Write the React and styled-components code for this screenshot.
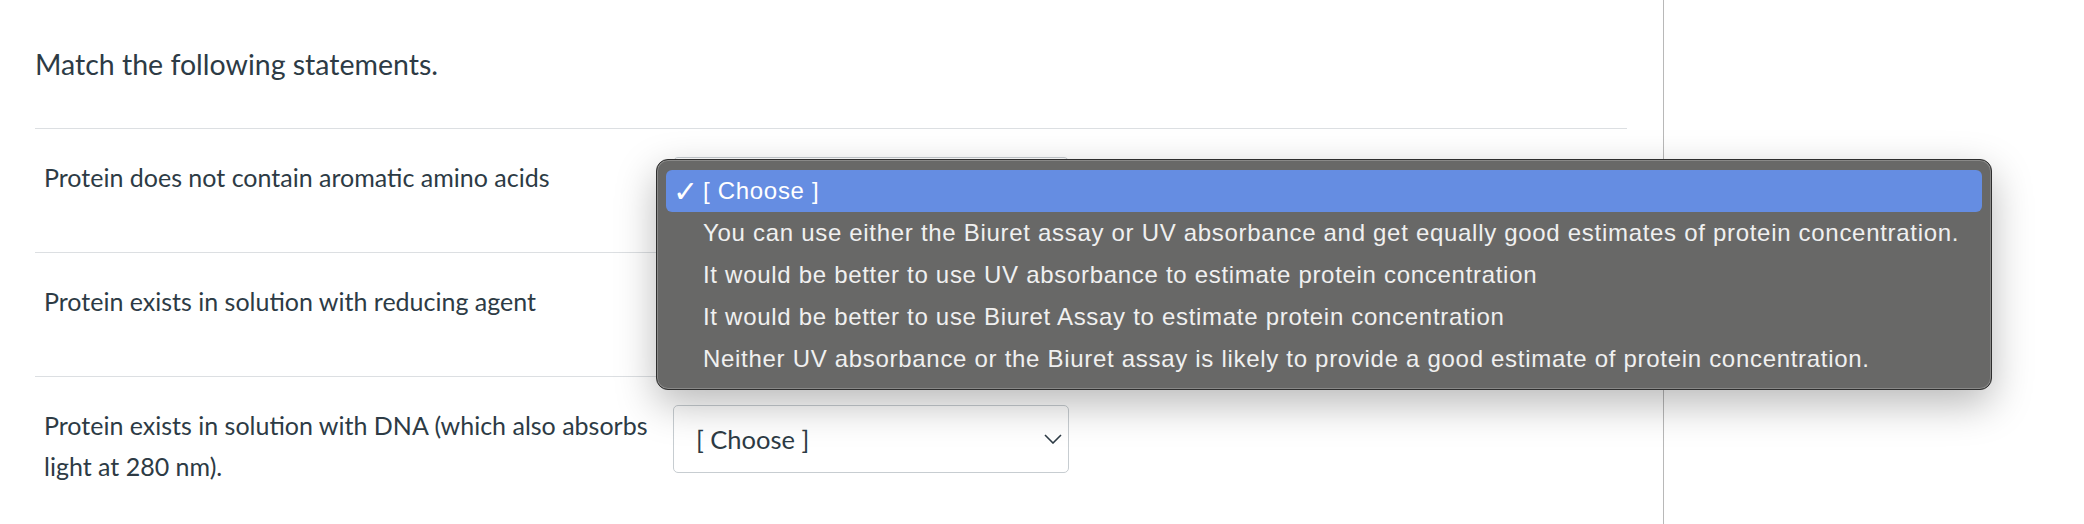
import React from "react";
import styled, { createGlobalStyle } from "styled-components";

const GlobalStyle = createGlobalStyle`
  html, body {
    margin: 0;
    padding: 0;
    background: #ffffff;
  }
  body {
    font-family: Lato, "Noto Sans", sans-serif;
    color: #2d3b45;
  }
`;

const statements = [
  "Protein does not contain aromatic amino acids",
  "Protein exists in solution with reducing agent",
  "Protein exists in solution with DNA (which also absorbs light at 280 nm).",
];

const options = [
  "You can use either the Biuret assay or UV absorbance and get equally good estimates of protein concentration.",
  "It would be better to use UV absorbance to estimate protein concentration",
  "It would be better to use Biuret Assay to estimate protein concentration",
  "Neither UV absorbance or the Biuret assay is likely to provide a good estimate of protein concentration.",
];

function App() {
  return (
    <>
      <GlobalStyle />
      <Page>
        <Main>
          <Title>Match the following statements.</Title>
          {statements.map((text, index) => (
            <MatchRow key={index}>
              <Statement>{text}</Statement>
              <SelectWrap>
                <SelectBox>
                  <span>[ Choose ]</span>
                  <Chevron viewBox="0 0 18 10">
                    <path d="M1 1 L9 9 L17 1" />
                  </Chevron>
                </SelectBox>
                {index === 0 && (
                  <PopupMenu>
                    <MenuItem $selected>
                      <Check>✓</Check>
                      [ Choose ]
                    </MenuItem>
                    {options.map((opt, i) => (
                      <MenuItem key={i}>
                        <Check />
                        {opt}
                      </MenuItem>
                    ))}
                  </PopupMenu>
                )}
              </SelectWrap>
            </MatchRow>
          ))}
        </Main>
        <Sidebar />
      </Page>
    </>
  );
}

const Page = styled.div`
  display: flex;
  min-height: 524px;
`;

const Main = styled.div`
  width: 1592px;
  padding: 0 36px 0 35px;
  border-right: 1px solid #b8b8b8;
`;

const Sidebar = styled.div`
  flex: 1;
`;

const Title = styled.div`
  font-size: 28.5px;
  line-height: 40px;
  padding: 44px 0 44px;
  border-bottom: 1px solid #dcdfe2;
`;

const MatchRow = styled.div`
  display: flex;
  align-items: flex-start;
  padding: 28px 0 27px 9px;
  border-bottom: 1px solid #dcdfe2;
  &:last-child {
    border-bottom: none;
  }
`;

const Statement = styled.div`
  width: 615px;
  margin-right: 14px;
  font-size: 25px;
  line-height: 41px;
`;

const SelectWrap = styled.div`
  position: relative;
`;

const SelectBox = styled.div`
  box-sizing: border-box;
  width: 396px;
  height: 68px;
  display: flex;
  align-items: center;
  justify-content: space-between;
  padding: 0 6px 0 22px;
  border: 1px solid #c7cdd1;
  border-radius: 5px;
  background: #ffffff;
  font-size: 25.5px;
  color: #2d3b45;
`;

const Chevron = styled.svg`
  width: 18px;
  height: 10px;
  fill: none;
  stroke: #2d3b45;
  stroke-width: 1.6;
`;

const PopupMenu = styled.div`
  position: absolute;
  left: -17px;
  top: 2px;
  z-index: 10;
  box-sizing: border-box;
  width: 1336px;
  height: 231px;
  padding: 10px 9px;
  background: #686867;
  border: 1px solid #2e2e2e;
  border-radius: 12px;
  box-shadow: inset 0 0 0 1px rgba(255, 255, 255, 0.22),
    0 14px 40px rgba(0, 0, 0, 0.28);
  font-family: "Liberation Sans", Arial, sans-serif;
`;

const MenuItem = styled.div`
  display: flex;
  align-items: center;
  height: 42px;
  border-radius: 6px;
  font-size: 24px;
  letter-spacing: 0.7px;
  white-space: nowrap;
  color: ${(p) => (p.$selected ? "#ffffff" : "#f0f0f0")};
  background: ${(p) => (p.$selected ? "#658de2" : "transparent")};
`;

const Check = styled.span`
  width: 37px;
  padding-left: 7px;
  box-sizing: border-box;
  font-family: "DejaVu Sans", sans-serif;
  font-size: 30px;
  font-weight: bold;
  letter-spacing: 0;
`;

export default App;
